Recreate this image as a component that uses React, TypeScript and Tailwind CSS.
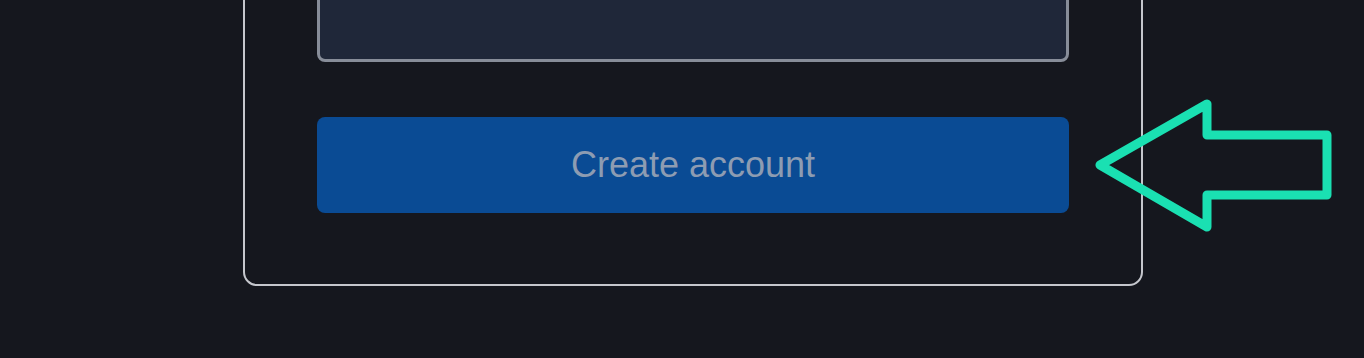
import React from "react";

export default function App() {
  return (
    <div
      className="relative h-[358px] w-[1364px] overflow-hidden bg-[#15171e]"
      style={{ fontFamily: '"Liberation Sans", Arial, sans-serif' }}
    >
      <div className="ml-[243px] mt-[-106px] flex w-[900px] flex-col gap-[55px] rounded-[14px] border-2 border-[#c5c7cd] px-[72px] pb-[71px] pt-[40px]">
        <div className="h-[126px] w-full rounded-[8px] border-[3px] border-[#878d99] bg-[#1f2739]" />
        <button className="flex h-[96px] w-full items-center justify-center rounded-[8px] bg-[#0a4b94] text-[36px] text-[#8d9cb2]">
          Create account
        </button>
      </div>
      <svg
        className="absolute left-[1080px] top-[90px]"
        width="270"
        height="155"
        viewBox="1080 90 270 155"
        fill="none"
      >
        <path
          d="M1100 165 L1207 104 L1207 135 L1327 135 L1327 195 L1207 195 L1207 227 Z"
          stroke="#1ae0b2"
          strokeWidth="9"
          strokeLinejoin="round"
        />
      </svg>
    </div>
  );
}
